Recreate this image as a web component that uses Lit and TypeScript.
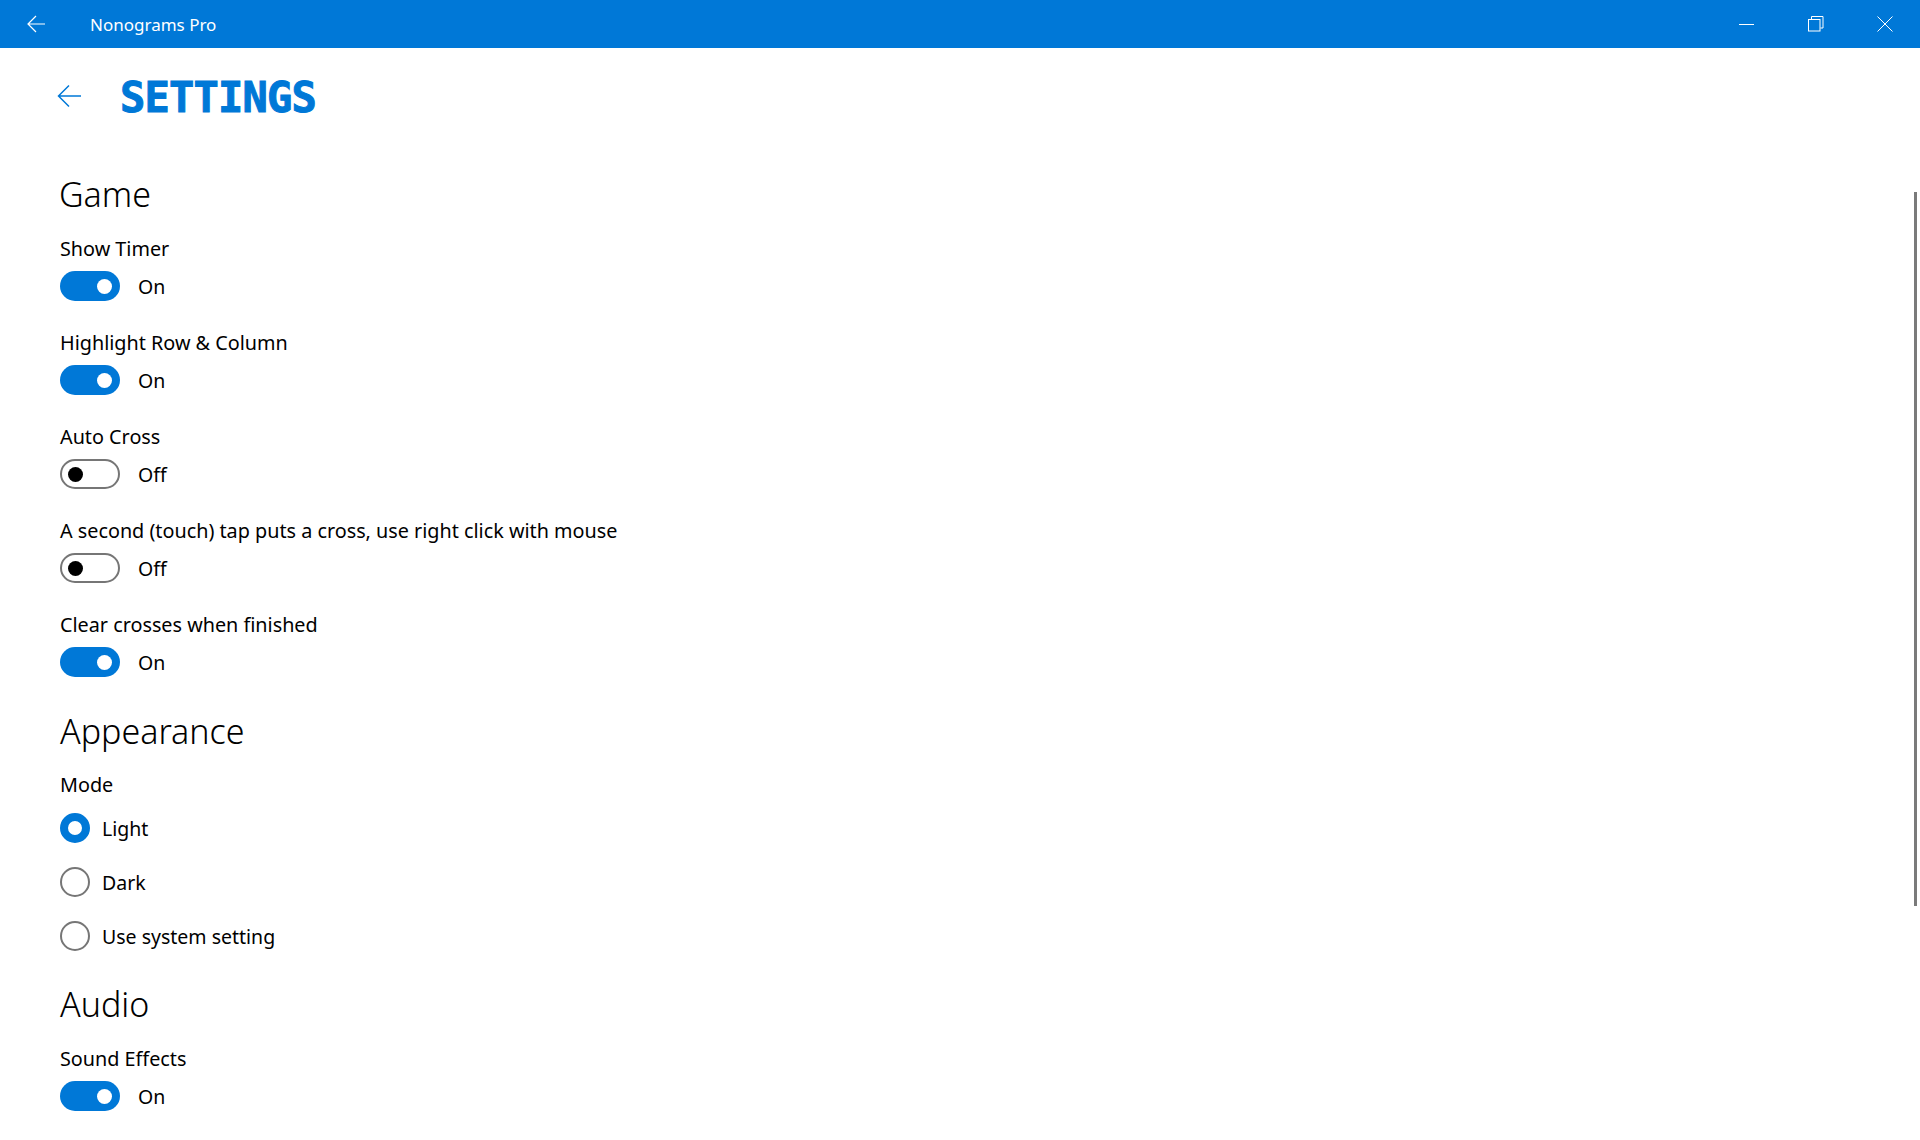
import { LitElement, html, css } from "lit";
import { customElement } from "lit/decorators.js";

const toggle = (label: string, on: boolean) => html`
  <div class="setting">
    <div class="label">${label}</div>
    <div class="toggle-row">
      <span class="toggle ${on ? "on" : "off"}"><span class="knob"></span></span>
      <span class="state">${on ? "On" : "Off"}</span>
    </div>
  </div>`;

const radio = (label: string, on: boolean) => html`
  <div class="radio-row">
    <span class="radio ${on ? "on" : ""}"></span><span class="radio-label">${label}</span>
  </div>`;

@customElement("app-root")
export class AppRoot extends LitElement {
  static styles = css`
    :host { display: block; position: relative; width: 1920px; height: 1140px; overflow: hidden; background: #fff; color: #000;
      font-family: "Noto Sans", "Open Sans", sans-serif; }
    .titlebar { height: 48px; background: #0078d7; color: #fff; display: flex; align-items: center; padding-right: 1px; }
    .tb-back { width: 90px; display: flex; padding-left: 27px; box-sizing: border-box; }
    .tb-title { font-size: 17px; flex: 1; }
    .win { width: 69px; height: 48px; display: flex; align-items: center; justify-content: center; }
    .win svg, .tb-back svg, .back svg { display: block; }
    .header { display: flex; align-items: center; height: 96px; padding-left: 57px; }
    .back { width: 63px; display: flex; }
    .page-title { font-family: "DejaVu Sans Mono", monospace; font-weight: 700; font-size: 42px; line-height: 50px; color: #0078d7;
      letter-spacing: -0.8px; -webkit-text-stroke: 1px #0078d7; position: relative; top: 2px; }
    .content { padding-left: 60px; display: flex; flex-direction: column; }
    h2 { margin: 0; font-weight: 300; font-size: 34px; line-height: 46px; }
    h2.first { margin: 27px 0 8px -1px; }
    .setting { height: 94px; box-sizing: border-box; padding-top: 10px; }
    .label { font-size: 19.8px; line-height: 28px; }
    .toggle-row { display: flex; align-items: center; margin-top: 8px; height: 30px; }
    .toggle { width: 60px; height: 30px; border-radius: 15px; box-sizing: border-box; display: flex; align-items: center; flex: none; }
    .toggle.on { background: #0078d7; justify-content: flex-end; padding-right: 8px; }
    .toggle.off { border: 2px solid #767676; padding-left: 6px; }
    .knob { width: 15px; height: 15px; border-radius: 50%; background: #fff; }
    .off .knob { background: #000; }
    .state { margin-left: 18px; font-size: 19.5px; line-height: 28px; padding-top: 2px; }
    .section { margin-top: 13px; }
    .mode { padding-top: 17px; }
    .radios { display: flex; flex-direction: column; margin-top: 14px; gap: 24px; }
    .radio-row { display: flex; align-items: center; height: 30px; }
    .radio { width: 30px; height: 30px; border-radius: 50%; border: 2px solid #767676; box-sizing: border-box; flex: none; }
    .radio.on { border: 8px solid #0078d7; background: #fff; }
    .radio-label { margin-left: 12px; font-size: 19.5px; line-height: 28px; padding-top: 2px; }
    .audio { margin-top: 30px; }
    .audio-setting { margin-top: 8px; }
    .scrollbar { position: absolute; left: 1914px; top: 192px; width: 3px; height: 714px; background: #7a7a7a; }
  `;

  render() {
    return html`
      <div class="titlebar">
        <div class="tb-back">
          <svg width="18" height="18" viewBox="0 0 18 18" fill="none" stroke="#fff" stroke-width="1.2"><path d="M18 9H1M9 1 1 9l8 8"/></svg>
        </div>
        <div class="tb-title">Nonograms Pro</div>
        <div class="win"><svg width="16" height="16" viewBox="0 0 16 16" fill="none" stroke="#fff"><path d="M0 8.500h15"/></svg></div>
        <div class="win"><svg width="16" height="16" viewBox="0 0 16 16" fill="none" stroke="#fff"><path d="M3.500 3V.5h11.500v11.500H12.500"/><rect x=".5" y="3.500" width="11.500" height="11.500"/></svg></div>
        <div class="win"><svg width="16" height="16" viewBox="0 0 16 16" fill="none" stroke="#fff"><path d="M.5.5l15 15M15.500.5l-15 15"/></svg></div>
      </div>
      <div class="header">
        <div class="back">
          <svg width="24" height="24" viewBox="0 0 24 24" fill="none" stroke="#0078d7" stroke-width="1.5"><path d="M24 12H1.500M12 1.500 1.500 12 12 22.500"/></svg>
        </div>
        <div class="page-title">SETTINGS</div>
      </div>
      <div class="content">
        <h2 class="first">Game</h2>
        ${toggle("Show Timer", true)}
        ${toggle("Highlight Row & Column", true)}
        ${toggle("Auto Cross", false)}
        ${toggle("A second (touch) tap puts a cross, use right click with mouse", false)}
        ${toggle("Clear crosses when finished", true)}
        <h2 class="section">Appearance</h2>
        <div class="mode">
          <div class="label">Mode</div>
          <div class="radios">
            ${radio("Light", true)}
            ${radio("Dark", false)}
            ${radio("Use system setting", false)}
          </div>
        </div>
        <h2 class="audio">Audio</h2>
        <div class="audio-setting">${toggle("Sound Effects", true)}</div>
      </div>
      <div class="scrollbar"></div>
    `;
  }
}
